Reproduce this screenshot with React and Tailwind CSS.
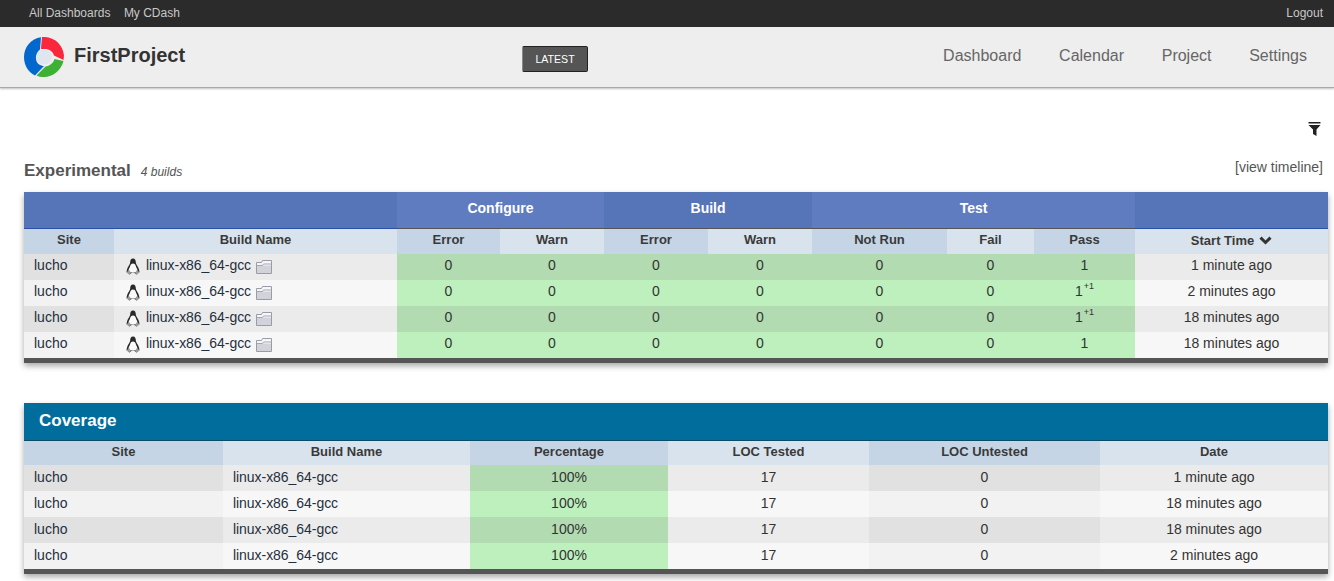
const font = { fontFamily: '"Liberation Sans", Arial, sans-serif' }

const builds = [
  { delta: false, time: '1 minute ago' },
  { delta: true, time: '2 minutes ago' },
  { delta: true, time: '18 minutes ago' },
  { delta: false, time: '18 minutes ago' },
]

const coverage = ['1 minute ago', '18 minutes ago', '18 minutes ago', '2 minutes ago']

function Logo() {
  return (
    <svg width="40" height="40" viewBox="0 0 40 40" className="shrink-0">
      <path d="M17 0.200C7 1.500 0 10 0 20c0 8 4 15 11 18.500l9-9.500c-3 0-7.500-2-8-7-.5-5 2.500-8.500 4-9.500z" fill="#0368cd" />
      <path d="M18 0.100C19 0 20 0 21 0c10 .5 18 8 19 18.500l-.5 4.500-9.500-4.500c-1-4-5-6.500-9-6.500h-4z" fill="#fa263c" />
      <path d="M39.500 24C37 33.500 29 40 20 40c-2.500 0-5.500-.5-7.500-1.500l9-9c4-.5 8-3.500 9-7.500z" fill="#3cb134" />
      <circle cx="20" cy="20" r="7.500" fill="#dfe6f0" />
    </svg>
  )
}

function Penguin() {
  return (
    <svg width="14" height="17" viewBox="0 0 14 17" className="shrink-0 mt-[4px]">
      <path d="M7 .5C4.800 .5 4.200 2.500 4.200 4.500c0 2-2.700 4-3.200 7L.5 14l3 2.500 2-1.500h3l2 1.500 3-2.500-.5-2.500c-.5-3-3.200-5-3.200-7 0-2-.6-4-2.800-4z" fill="#2a2a2a" />
      <path d="M7 5.500c-1.700 0-2.400 1-2.800 2.500-.4 1.800-1.700 3-1.700 4.500 0 1.300 2.300 2.200 4.500 2.200s4.500-.9 4.500-2.200c0-1.500-1.300-2.700-1.700-4.500C9.400 6.500 8.700 5.500 7 5.500z" fill="#fafafa" />
      <path d="M.3 14.300l3-2 1.700 2.700-1.500 1.700zM13.700 14.300l-3-2-1.700 2.700 1.500 1.700z" fill="#9c9c9c" />
    </svg>
  )
}

function Folder() {
  return (
    <svg width="16" height="14" viewBox="0 0 16 14" className="shrink-0 mt-[6px] ml-[-1px]">
      <path d="M.5 2.500h5l1-2h9v13H.5z" fill="#f6f6f8" stroke="#9a9aa8" />
      <path d="M1 5.500h14V13H1z" fill="#d2d3da" />
      <path d="M.5 5.500h6l1-1.500h8" fill="none" stroke="#a5a5b2" />
    </svg>
  )
}

// pad lifts the label above the cell's middle, the reference sits high in its rows
function Th({ shade, pad, children }) {
  return (
    <th className={`font-bold text-[13px] text-[#3a3a3a] p-0 align-middle ${pad} ${shade ? 'bg-[#c6d5e5]' : 'bg-[#d9e3ee]'}`}>
      {children}
    </th>
  )
}

function Ok({ odd, pad, children }) {
  return (
    <td className={`p-0 text-center ${pad} ${odd ? 'bg-[#b2dbb2]' : 'bg-[#bdf0bd]'}`}>{children}</td>
  )
}

export default function App() {
  return (
    <div style={font} className="min-h-[581px] bg-white text-[14px] text-[#333] overflow-hidden">
      {/* top bar */}
      <div className="h-[27px] bg-[#2b2b2b] flex items-center justify-between pl-[29px] pr-[11px] pb-[1px] text-[12px] text-[#c8c8c8]">
        <div className="flex gap-[13.500px]">
          <span>All Dashboards</span>
          <span>My CDash</span>
        </div>
        <span>Logout</span>
      </div>

      {/* header */}
      <div className="h-[61px] bg-[#eeeeee] border-b border-[#aaa] shadow-[0_1px_2px_rgba(0,0,0,0.25)] flex items-center pl-[24px] pr-[27px]">
        <div className="flex items-center gap-[10px] w-[498px]">
          <Logo />
          <span className="text-[20px] font-bold text-[#333] mt-[-4px]">FirstProject</span>
        </div>
        <button className="mt-[3px] w-[66px] h-[26px] pt-[2px] bg-[#555] border border-[#222] border-l-[#888] rounded-[2px] text-white text-[10.600px]">
          LATEST
        </button>
        <nav className="ml-auto flex gap-[37.700px] text-[16px] text-[#666] mt-[-2px]">
          <span>Dashboard</span>
          <span>Calendar</span>
          <span>Project</span>
          <span>Settings</span>
        </nav>
      </div>

      <div className="pl-[24px] pr-[6px]">
        {/* filter */}
        <div className="flex justify-end pt-[34px] pr-[7px] h-[50px]">
          <svg width="13" height="14" viewBox="0 0 13 14">
            <path d="M.5 0h12v1.500H.5z" fill="#222" />
            <path d="M.5 3h12L8.500 7.500V14L5 12V7.500z" fill="#222" />
          </svg>
        </div>

        {/* title */}
        <div className="h-[54px] pt-[20px] flex items-start justify-between">
          <div className="flex items-baseline gap-[10px]">
            <span className="text-[17px] font-bold text-[#555]">Experimental</span>
            <span className="text-[12px] italic text-[#555]">4 builds</span>
          </div>
          <span className="text-[14px] text-[#555] mr-[5px] mt-[-1px]">[view timeline]</span>
        </div>

        {/* builds */}
        <table className="w-[1304px] table-fixed border-separate border-spacing-0 shadow-[0_3px_6px_rgba(0,0,0,0.35)]">
          <colgroup>
            <col className="w-[90px]" />
            <col className="w-[283px]" />
            <col className="w-[103px]" />
            <col className="w-[104px]" />
            <col className="w-[104px]" />
            <col className="w-[104px]" />
            <col className="w-[135px]" />
            <col className="w-[87px]" />
            <col className="w-[101px]" />
            <col className="w-[193px]" />
          </colgroup>
          <thead>
            <tr className="h-[37px] text-white text-[14px] font-bold">
              <th colSpan="2" className="p-0 bg-[#5674b8] border-b border-[#2a4fa8]" />
              <th colSpan="2" className="p-0 pb-[4px] bg-[#5f7cc0] border-b border-[#555]">Configure</th>
              <th colSpan="2" className="p-0 pb-[4px] bg-[#5674b8] border-b border-[#555]">Build</th>
              <th colSpan="3" className="p-0 pb-[4px] bg-[#5f7cc0] border-b border-[#555]">Test</th>
              <th className="p-0 bg-[#5674b8] border-b border-[#2a4fa8]" />
            </tr>
            <tr className="h-[25px]">
              <Th shade pad="pb-[4px]">Site</Th>
              <Th pad="pb-[4px]">Build Name</Th>
              <Th shade pad="pb-[4px]">Error</Th>
              <Th pad="pb-[4px]">Warn</Th>
              <Th shade pad="pb-[4px]">Error</Th>
              <Th pad="pb-[4px]">Warn</Th>
              <Th shade pad="pb-[4px]">Not Run</Th>
              <Th pad="pb-[4px]">Fail</Th>
              <Th shade pad="pb-[4px]">Pass</Th>
              <Th pad="pb-[2px]">
                <span className="inline-flex items-center gap-[5px]">
                  Start Time
                  <svg width="13" height="9" viewBox="0 0 13 9">
                    <path d="M1.500 1.700L6.500 6.500 11.500 1.700" fill="none" stroke="#333" strokeWidth="3" />
                  </svg>
                </span>
              </Th>
            </tr>
          </thead>
          <tbody>
            {builds.map((b, i) => {
              const odd = i % 2 === 0
              return (
                <tr key={i} className={`h-[26px] ${odd ? 'bg-[#ebebeb]' : 'bg-[#f7f7f7]'}`}>
                  <td className={`p-0 pl-[10px] pb-[4px] text-[#1f2f3f] ${odd ? 'bg-[#e1e1e1]' : 'bg-[#f2f2f2]'}`}>lucho</td>
                  <td className="p-0 pl-[12px] align-top">
                    <div className="flex items-start gap-[6px] text-[#1f2f3f]">
                      <Penguin />
                      <span className="mt-[1px] tracking-[-0.05px]">linux-x86_64-gcc</span>
                      <Folder />
                    </div>
                  </td>
                  {[0, 1, 2, 3, 4, 5].map((n) => (
                    <Ok key={n} odd={odd} pad="pb-[4px]">0</Ok>
                  ))}
                  <Ok odd={odd} pad="pb-[4px]">
                    1
                    {b.delta && <sup className="ml-[1px] top-[-7px] text-[9px]">+1</sup>}
                  </Ok>
                  <td className="p-0 pb-[4px] text-center">{b.time}</td>
                </tr>
              )
            })}
            <tr className="h-[5px] bg-[#555]">
              <td colSpan="10" className="p-0" />
            </tr>
          </tbody>
        </table>

        {/* coverage */}
        <table className="w-[1304px] mt-[40px] table-fixed border-separate border-spacing-0 shadow-[0_3px_6px_rgba(0,0,0,0.35)]">
          <colgroup>
            <col className="w-[199px]" />
            <col className="w-[247px]" />
            <col className="w-[198px]" />
            <col className="w-[201px]" />
            <col className="w-[231px]" />
            <col className="w-[228px]" />
          </colgroup>
          <thead>
            <tr className="h-[38px]">
              <th colSpan="6" className="p-0 pl-[15px] pb-[2px] text-left text-[17px] font-bold text-white bg-[#006d9c] border-b border-[#0d4a66]">
                Coverage
              </th>
            </tr>
            <tr className="h-[24px]">
              <Th shade pad="pb-[2px]">Site</Th>
              <Th pad="pb-[2px]">Build Name</Th>
              <Th shade pad="pb-[2px]">Percentage</Th>
              <Th pad="pb-[2px]">LOC Tested</Th>
              <Th shade pad="pb-[2px]">LOC Untested</Th>
              <Th pad="pb-[2px]">Date</Th>
            </tr>
          </thead>
          <tbody>
            {coverage.map((date, i) => {
              const odd = i % 2 === 0
              return (
                <tr key={i} className={`h-[26px] ${odd ? 'bg-[#ebebeb]' : 'bg-[#f7f7f7]'}`}>
                  <td className={`p-0 pl-[10px] pb-[2px] text-[#1f2f3f] ${odd ? 'bg-[#e1e1e1]' : 'bg-[#f2f2f2]'}`}>lucho</td>
                  <td className="p-0 pl-[10px] pb-[2px] text-[#1f2f3f] tracking-[-0.05px]">linux-x86_64-gcc</td>
                  <Ok odd={odd} pad="pb-[2px]">100%</Ok>
                  <td className="p-0 pb-[2px] text-center">17</td>
                  <td className={`p-0 pb-[2px] text-center ${odd ? 'bg-[#e1e1e1]' : 'bg-[#f2f2f2]'}`}>0</td>
                  <td className="p-0 pb-[2px] text-center">{date}</td>
                </tr>
              )
            })}
            <tr className="h-[5px] bg-[#555]">
              <td colSpan="6" className="p-0" />
            </tr>
          </tbody>
        </table>
      </div>
    </div>
  )
}
